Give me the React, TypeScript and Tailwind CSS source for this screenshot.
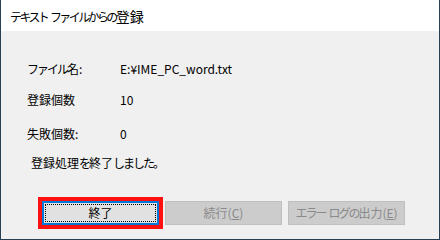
import React from "react";

const font = "font-['Noto_Sans_CJK_JP','Noto_Sans',sans-serif]";

// Yu Gothic UI の仮名は幅が狭いので、仮名の連なりだけ字間を詰める
const isKana = (c: string) => /[\u3040-\u30ff]/.test(c);

function Jp({ text, kana }: { text: string; kana: string }) {
  const runs: { s: string; k: boolean }[] = [];
  for (const c of text) {
    const k = isKana(c);
    const last = runs[runs.length - 1];
    if (last && last.k === k) last.s += c;
    else runs.push({ s: c, k });
  }
  return (
    <>
      {runs.map((r, i) =>
        r.k ? (
          <span key={i} className={kana}>
            {r.s}
          </span>
        ) : (
          <span key={i}>{r.s}</span>
        )
      )}
    </>
  );
}

export default function App() {
  return (
    <div className={`w-[440px] h-[240px] flex flex-col bg-[#f0f0f0] border-l border-r border-b border-[#2b3f52] text-[12px] text-black ${font}`}>
      {/* title bar */}
      <div className="h-[31px] flex items-center pl-[9px] bg-white shrink-0">
        <span className="leading-none text-[14px] whitespace-pre">
          <Jp text="テキスト" kana="text-[12px] tracking-[-2.6px]" />
          <span className="text-[12px]"> </span>
          <Jp text="ファイルからの登録" kana="text-[12px] tracking-[-2.6px]" />
        </span>
      </div>

      {/* body */}
      <div className="flex flex-col pt-[28px] pl-[26px]">
        <div className="h-[20px] flex items-center">
          <span className="w-[93px]">
            <Jp text="ファイル名:" kana="tracking-[-2px]" />
          </span>
          <span>E:¥IME_PC_word.txt</span>
        </div>
        <div className="h-[20px] flex items-center mt-[11px]">
          <span className="w-[93px]">登録個数</span>
          <span>10</span>
        </div>
        <div className="h-[20px] flex items-center mt-[14px]">
          <span className="w-[93px]">失敗個数:</span>
          <span>0</span>
        </div>
        <div className="h-[20px] flex items-center mt-[9px] pl-[4px]">
          <Jp text="登録処理を終了しました。" kana="tracking-[-2px]" />
        </div>
      </div>

      {/* buttons */}
      <div className="flex flex-row gap-[6px] pl-[41px] mt-[28px]">
        <button className="relative w-[117px] h-[24px] bg-[#e1e1e1] border-2 border-[#0078d7] outline-4 outline-[#ff1010] flex items-center justify-center">
          <span className="absolute inset-[1px] border border-dotted border-black" />
          <span>終了</span>
        </button>
        <button disabled className="w-[117px] h-[24px] bg-[#cccccc] border border-[#bfbfbf] text-[#8a8a8a] flex items-center justify-center">
          <span>
            続行(<span className="underline">C</span>)
          </span>
        </button>
        <button disabled className="w-[117px] h-[24px] bg-[#cccccc] border border-[#bfbfbf] text-[#8a8a8a] flex items-center justify-center">
          <span className="whitespace-pre">
            <Jp text="エラー" kana="tracking-[-2px]" />
            <span className="pl-[3px]" />
            <Jp text="ログの出力" kana="tracking-[-2px]" />
            (<span className="underline">E</span>)
          </span>
        </button>
      </div>
    </div>
  );
}
